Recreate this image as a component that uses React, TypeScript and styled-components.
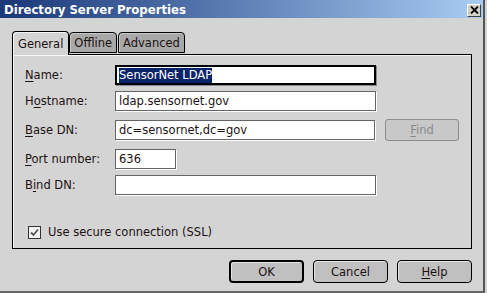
import * as React from 'react'
import styled, { createGlobalStyle } from 'styled-components'

const GlobalStyle = createGlobalStyle`
  html, body {
    margin: 0;
    padding: 0;
    background: #d4d4d4;
  }
  body {
    font: 11.5px "DejaVu Sans", Verdana, sans-serif;
    color: #1c1212;
  }
`

type Row = {
  label: string
  key: string
  value: string
  width: number
  top: number
  focused?: boolean
  find?: boolean
}

const rows: Row[] = [
  { label: 'Name:', key: 'N', value: 'SensorNet LDAP', width: 261, top: 10, focused: true },
  { label: 'Hostname:', key: 'o', value: 'ldap.sensornet.gov', width: 261, top: 6 },
  { label: 'Base DN:', key: 'B', value: 'dc=sensornet,dc=gov', width: 261, top: 9, find: true },
  { label: 'Port number:', key: 'P', value: '636', width: 61, top: 9 },
  { label: 'Bind DN:', key: 'i', value: '', width: 261, top: 6 },
]

// underline the first occurrence of the access key
const Mnemonic = ({ text, k }: { text: string; k: string }) => {
  const i = text.indexOf(k)
  if (i < 0) return <>{text}</>
  return (
    <>
      {text.slice(0, i)}
      <U>{text[i]}</U>
      {text.slice(i + 1)}
    </>
  )
}

const App = () => (
  <>
    <GlobalStyle />
    <Window>
      <TitleBar>
        <Title>Directory Server Properties</Title>
        <CloseBox>
          <svg width="9" height="8" viewBox="0 0 9 8">
            <path d="M1 0.5 L8 7.5 M8 0.5 L1 7.5" stroke="#000" strokeWidth="1.8" />
          </svg>
        </CloseBox>
      </TitleBar>

      <Body>
        <Tabs>
          <Tab $active>General</Tab>
          <Tab>Offline</Tab>
          <Tab>Advanced</Tab>
        </Tabs>

        <Panel>
          {rows.map((r) => (
            <FormRow key={r.label} $top={r.top}>
              <Label>
                <Mnemonic text={r.label} k={r.key} />
              </Label>
              <Field $width={r.width} $focused={r.focused}>
                {r.focused ? <Selected>{r.value}</Selected> : r.value}
              </Field>
              {r.find && (
                <FindButton disabled>
                  <U>F</U>ind
                </FindButton>
              )}
            </FormRow>
          ))}

          <CheckRow>
            <CheckBox>
              <svg width="9" height="9" viewBox="0 0 9 9">
                <path d="M1 4.5 L3.5 7 L8 1.5" fill="none" stroke="#555" strokeWidth="1.8" />
              </svg>
            </CheckBox>
            Use secure connection (SSL)
          </CheckRow>
        </Panel>

        <ButtonBar>
          <Button $default>OK</Button>
          <Button>Cancel</Button>
          <Button>
            <U>H</U>elp
          </Button>
        </ButtonBar>
      </Body>
    </Window>
  </>
)

const Window = styled.div`
  width: 483px;
  height: 291px;
  border-right: 2px solid #555;
  border-bottom: 2px solid #666;
  background: #d4d4d4;
  display: flex;
  flex-direction: column;
`

const TitleBar = styled.div`
  height: 18px;
  display: flex;
  align-items: center;
  justify-content: space-between;
  padding: 0 2px 0 4px;
  background: linear-gradient(to right, #1a3878, #5878b0 45%, #a8ccf2);
`

const Title = styled.div`
  font: bold 13px "DejaVu Sans Condensed", "DejaVu Sans", sans-serif;
  color: #fff;
`

const CloseBox = styled.div`
  width: 14px;
  height: 13px;
  margin-top: 2px;
  box-sizing: border-box;
  background: #d4d0c8;
  border: 1px solid;
  border-color: #fff #404040 #404040 #fff;
  display: flex;
  align-items: center;
  justify-content: center;
`

const Body = styled.div`
  padding: 13px 11px 0 12px;
`

const Tabs = styled.div`
  display: flex;
  align-items: flex-end;
  height: 23px;
  position: relative;
  z-index: 1;
`

const Tab = styled.div<{ $active?: boolean }>`
  box-sizing: border-box;
  height: ${(p) => (p.$active ? '24px' : '21px')};
  margin-bottom: ${(p) => (p.$active ? '-1px' : '1px')};
  padding: 1px ${(p) => (p.$active ? '5px' : '4px')} 0;
  display: flex;
  align-items: center;
  border: 1px solid #000;
  border-bottom: ${(p) => (p.$active ? 'none' : '1px solid #000')};
  border-radius: 4px 4px 0 0;
  background: ${(p) => (p.$active ? '#d4d4d4' : '#a8a8a8')};
  box-shadow: ${(p) => (p.$active ? 'inset 1px 1px 0 #f4f4f4' : 'inset 1px 1px 0 #c8c8c8')};
  font-size: 11.5px;
  margin-right: ${(p) => (p.$active ? '0' : '1px')};
`

const Panel = styled.div`
  box-sizing: border-box;
  height: 195px;
  border: 1px solid #000;
  box-shadow: inset 1px 1px 0 #f4f4f4;
  padding: 0 12px;
`

const FormRow = styled.div<{ $top: number }>`
  display: flex;
  align-items: center;
  height: 20px;
  margin-top: ${(p) => p.$top}px;
`

const Label = styled.div`
  width: 90px;
  flex: none;
`

const U = styled.span`
  text-decoration: underline;
  text-underline-offset: 2px;
`

const Field = styled.div<{ $width: number; $focused?: boolean }>`
  box-sizing: border-box;
  width: ${(p) => p.$width}px;
  height: 20px;
  background: #fff;
  display: flex;
  align-items: center;
  padding-left: ${(p) => (p.$focused ? '2px' : '3px')};
  white-space: nowrap;
  border: ${(p) => (p.$focused ? '2px solid #000' : '1px solid #646464')};
  box-shadow: ${(p) => (p.$focused ? '1px 1px 0 #8a8a8a' : '1px 1px 0 #fff')};
  font-size: 11.5px;
`

const Selected = styled.span`
  background: #0a246a;
  color: #fff;
  line-height: 15px;
`

const FindButton = styled.button`
  box-sizing: border-box;
  margin-left: 10px;
  width: 74px;
  height: 22px;
  border: 1px solid #8c8c8c;
  border-radius: 3px;
  background: #c8c8c8;
  color: #8a8a8a;
  font: 11.5px "DejaVu Sans", sans-serif;
  padding: 0;
`

const CheckRow = styled.div`
  display: flex;
  align-items: center;
  margin-top: 30px;
  padding-left: 3px;
  font-size: 11.5px;
  gap: 7px;
`

const CheckBox = styled.div`
  box-sizing: border-box;
  width: 13px;
  height: 13px;
  border: 1px solid #333;
  background: #f2f2f2;
  display: flex;
  align-items: center;
  justify-content: center;
`

const ButtonBar = styled.div`
  display: flex;
  justify-content: flex-end;
  gap: 9px;
  margin-top: 11px;
`

const Button = styled.button<{ $default?: boolean }>`
  box-sizing: border-box;
  width: 75px;
  height: 23px;
  padding: 0;
  border: ${(p) => (p.$default ? '2px' : '1px')} solid #000;
  border-radius: 4px;
  background: #c0c0c0;
  box-shadow: inset 1px 1px 0 #e6e6e6;
  color: #1c1212;
  font: 11.5px "DejaVu Sans", sans-serif;
`

export default App
